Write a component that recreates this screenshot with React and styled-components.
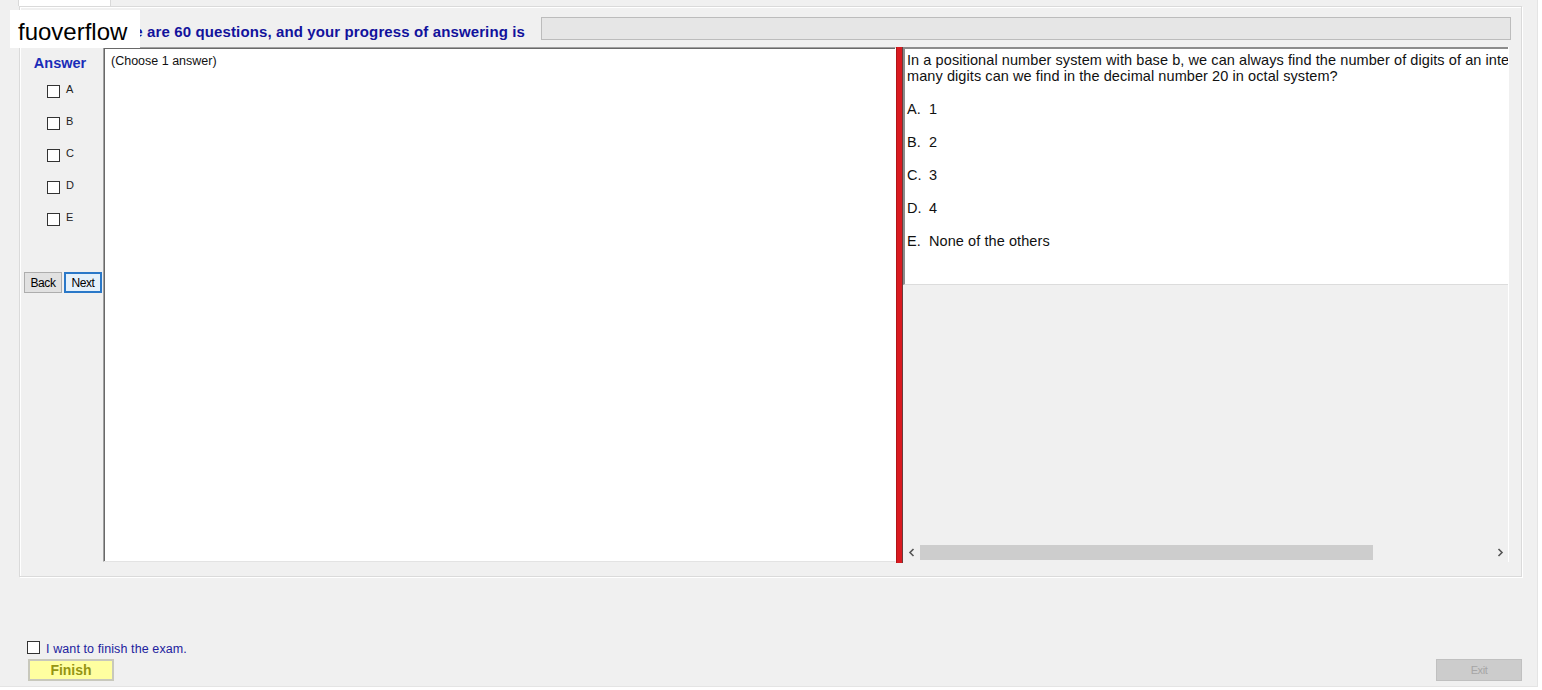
import React from "react";
import styled, { createGlobalStyle } from "styled-components";

const Global = createGlobalStyle`
  html, body { margin: 0; padding: 0; background: #ffffff; }
  body { font-family: "Liberation Sans", Arial, sans-serif; }
  * { box-sizing: border-box; }
`;

const Frame = styled.div`
  position: relative;
  width: 1538px;
  height: 687px;
  background: #f0f0f0;
  display: flex;
  flex-direction: column;
  border-right: 1px solid #e4e4e4;
  border-bottom: 1px solid #e4e4e4;
`;

const TabStrip = styled.div`
  height: 6px;
  padding-left: 18px;
  display: flex;
`;

const Tab = styled.div`
  width: 93px;
  height: 6px;
  background: #ffffff;
  border: 1px solid #d9d9d9;
  border-top: none;
  border-bottom: none;
`;

const TabPage = styled.div`
  margin-left: 19px;
  width: 1503px;
  height: 571px;
  border: 1px solid #dadada;
  box-shadow: inset 1px 1px 0 #ffffff, 1px 1px 0 #ffffff;
  display: flex;
  flex-direction: column;
`;

const Header = styled.div`
  height: 40px;
  display: flex;
  align-items: flex-start;
`;

const HeaderLabel = styled.div`
  width: 505px;
  padding-top: 16px;
  text-align: right;
  font: bold 15px/18px "Liberation Sans", Arial, sans-serif;
  letter-spacing: 0.12px;
  color: #12129c;
  white-space: nowrap;
  overflow: hidden;
`;

const Progress = styled.div`
  flex: 1;
  margin: 10px 10px 0 16px;
  height: 23px;
  background: #e6e6e6;
  border: 1px solid #bcbcbc;
`;

const Body = styled.div`
  display: flex;
  height: 516px;
`;

const AnswerCol = styled.div`
  width: 83px;
  display: flex;
  flex-direction: column;
`;

const AnswerTitle = styled.div`
  margin-top: 8px;
  text-align: center;
  font: bold 14.5px/16px "Liberation Sans", Arial, sans-serif;
  color: #1a2cb8;
  padding-right: 3px;
`;

const OptionList = styled.div`
  margin-top: 4px;
  padding-left: 27px;
  display: flex;
  flex-direction: column;
`;

const OptionRow = styled.label`
  height: 32px;
  display: flex;
  align-items: center;
  gap: 6px;
  font: 11px/12px "Liberation Sans", Arial, sans-serif;
  color: #222;
`;

const Box = styled.span`
  display: inline-block;
  width: 13px;
  height: 13px;
  background: #ffffff;
  border: 1px solid #333333;
  flex: none;
`;

const OptLabel = styled.span`
  margin-top: -4px;
`;

const NavRow = styled.div`
  margin-top: 37px;
  padding-left: 4px;
  display: flex;
  gap: 2px;
`;

const NavButton = styled.button`
  width: 38px;
  height: 21px;
  padding: 0;
  font: 12px "Liberation Sans", Arial, sans-serif;
  letter-spacing: -0.4px;
  color: #000;
  background: ${(p) => (p.$focused ? "#e5f1fb" : "#e1e1e1")};
  border: ${(p) => (p.$focused ? "2px solid #2a78c8" : "1px solid #adadad")};
`;

const ChoiceBox = styled.div`
  width: 793px;
  height: 515px;
  background: #ffffff;
  border-top: 1px solid #a0a0a0;
  border-left: 1px solid #a0a0a0;
  border-right: 1px solid #ffffff;
  border-bottom: 1px solid #e3e3e3;
  box-shadow: inset 1px 1px 0 #696969;
  padding: 6px 0 0 7px;
  font: 12.5px/14px "Liberation Sans", Arial, sans-serif;
  color: #111;
`;

const Splitter = styled.div`
  width: 7px;
  height: 516px;
  background: #da1a20;
  border-right: 1px solid #6a3b3b;
  border-left: 1px solid #b01518;
`;

const QuestionPane = styled.div`
  width: 606px;
  height: 515px;
  display: flex;
  flex-direction: column;
  background: #f0f0f0;
  border-right: 1px solid #ffffff;
`;

const QuestionContent = styled.div`
  height: 238px;
  background: #ffffff;
  border-top: 2px solid #8c8c8c;
  border-left: 2px solid #8c8c8c;
  border-bottom: 1px solid #dcdcdc;
  padding: 3px 0 0 2px;
  overflow: hidden;
  white-space: nowrap;
  font: 14.5px/16px "Liberation Sans", Arial, sans-serif;
  color: #111;
  letter-spacing: 0.08px;
`;

const QLine = styled.div``;

const Choice = styled.div`
  margin-top: 17px;
  display: flex;
`;

const ChoiceKey = styled.span`
  width: 22px;
  flex: none;
`;

const Filler = styled.div`
  flex: 1;
`;

const Scrollbar = styled.div`
  height: 17px;
  margin-bottom: 1px;
  display: flex;
  align-items: center;
  background: #f0f0f0;
`;

const Arrow = styled.div`
  width: 17px;
  height: 17px;
  display: flex;
  align-items: center;
  justify-content: center;
  color: #606060;
`;

const Track = styled.div`
  flex: 1;
  height: 17px;
  display: flex;
  align-items: center;
`;

const Thumb = styled.div`
  height: 15px;
  background: #cdcdcd;
`;

const Bottom = styled.div`
  flex: 1;
  display: flex;
  justify-content: space-between;
  align-items: flex-end;
  padding: 0 15px 5px 27px;
`;

const FinishGroup = styled.div`
  display: flex;
  flex-direction: column;
`;

const FinishCheck = styled.label`
  display: flex;
  align-items: center;
  gap: 6px;
  height: 15px;
  font: 12.5px/14px "Liberation Sans", Arial, sans-serif;
  color: #22229e;
  letter-spacing: 0.1px;
`;

const FinishLabel = styled.span`
  margin-top: 3px;
`;

const FinishButton = styled.button`
  margin: 4px 0 0 1px;
  width: 86px;
  height: 22px;
  padding: 0;
  background: #ffffa0;
  border: 2px solid #c8c8bc;
  font: bold 14px "Liberation Sans", Arial, sans-serif;
  color: #959512;
`;

const ExitButton = styled.button`
  width: 86px;
  height: 22px;
  padding: 0;
  background: #cccccc;
  border: 1px solid #c0c0c0;
  font: 11px "Liberation Sans", Arial, sans-serif;
  color: #a6a6a6;
  letter-spacing: -0.4px;
`;

const Watermark = styled.div`
  position: absolute;
  left: 10px;
  top: 10px;
  width: 130px;
  height: 38px;
  background: #ffffff;
  padding: 5px 0 0 8px;
  font: 24px/33px "Liberation Sans", Arial, sans-serif;
  color: #000;
`;

const Chevron = ({ dir }) => (
  <svg width="8" height="9" viewBox="0 0 8 9">
    <path
      d={dir === "left" ? "M5.5 1 L2 4.5 L5.5 8" : "M2.5 1 L6 4.5 L2.5 8"}
      fill="none"
      stroke="#555"
      strokeWidth="1.6"
    />
  </svg>
);

export default function App() {
  const options = ["A", "B", "C", "D", "E"];
  const choices = [
    ["A.", "1"],
    ["B.", "2"],
    ["C.", "3"],
    ["D.", "4"],
    ["E.", "None of the others"],
  ];
  return (
    <>
      <Global />
      <Frame>
        <TabStrip>
          <Tab />
        </TabStrip>
        <TabPage>
          <Header>
            <HeaderLabel>There are 60 questions, and your progress of answering is</HeaderLabel>
            <Progress />
          </Header>
          <Body>
            <AnswerCol>
              <AnswerTitle>Answer</AnswerTitle>
              <OptionList>
                {options.map((o) => (
                  <OptionRow key={o}>
                    <Box />
                    <OptLabel>{o}</OptLabel>
                  </OptionRow>
                ))}
              </OptionList>
              <NavRow>
                <NavButton>Back</NavButton>
                <NavButton $focused>Next</NavButton>
              </NavRow>
            </AnswerCol>
            <ChoiceBox>(Choose 1 answer)</ChoiceBox>
            <Splitter />
            <QuestionPane>
              <QuestionContent>
                <QLine>
                  In a positional number system with base b, we can always find the number of digits of an integer. So how
                </QLine>
                <QLine>many digits can we find in the decimal number 20 in octal system?</QLine>
                {choices.map(([k, v]) => (
                  <Choice key={k}>
                    <ChoiceKey>{k}</ChoiceKey>
                    <span>{v}</span>
                  </Choice>
                ))}
              </QuestionContent>
              <Filler />
              <Scrollbar>
                <Arrow>
                  <Chevron dir="left" />
                </Arrow>
                <Track>
                  <Thumb style={{ width: "453px" }} />
                </Track>
                <Arrow>
                  <Chevron dir="right" />
                </Arrow>
              </Scrollbar>
            </QuestionPane>
          </Body>
        </TabPage>
        <Bottom>
          <FinishGroup>
            <FinishCheck>
              <Box />
              <FinishLabel>I want to finish the exam.</FinishLabel>
            </FinishCheck>
            <FinishButton>Finish</FinishButton>
          </FinishGroup>
          <ExitButton>Exit</ExitButton>
        </Bottom>
        <Watermark>fuoverflow</Watermark>
      </Frame>
    </>
  );
}
